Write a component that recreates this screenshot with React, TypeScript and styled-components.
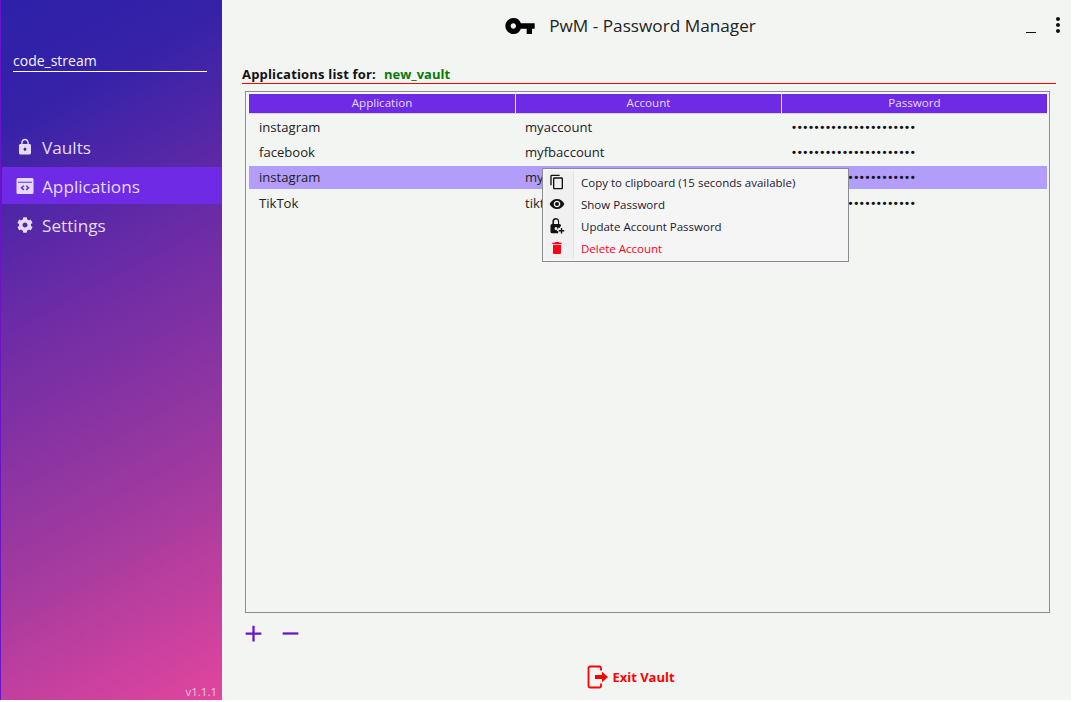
import styled, { createGlobalStyle } from "styled-components";
import { MdContentCopy, MdVisibility, MdDelete, MdMoreVert, MdVpnKey, MdLock, MdAdd, MdRemove } from "react-icons/md";
import { FaCog } from "react-icons/fa";

const Global = createGlobalStyle`
  html, body { margin: 0; padding: 0; background: #fff; }
  body { font-family: "Open Sans", "Noto Sans", sans-serif; }
`;

const Shell = styled.div`
  width: 1071px;
  height: 700px;
  display: flex;
  background: #f3f5f3;
  overflow: hidden;
`;

const Sidebar = styled.aside`
  width: 222px;
  flex: none;
  box-sizing: border-box;
  border-left: 1px solid #6a14c8;
  background: linear-gradient(152deg, #2d20a8 0%, #3522a8 15%, #6b2ba6 40%, #a23a9f 72%, #e2459e 100%);
  display: flex;
  flex-direction: column;
  color: #e4dcf5;
`;

const UserField = styled.div`
  margin: 51px 15px 0 12px;
  border-bottom: 1px solid #fff;
  color: #f6f3fb;
  font-size: 14px;
  line-height: 19px;
  height: 20px;
`;

const Nav = styled.nav`
  margin-top: 56px;
  display: flex;
  flex-direction: column;
  gap: 2px;
`;

const NavItem = styled.div<{ $active?: boolean }>`
  height: 37px;
  box-sizing: border-box;
  padding: 1px 0 0 14px;
  margin-left: 1px;
  display: flex;
  align-items: center;
  gap: 8px;
  font-size: 17.2px;
  background: ${(p) => (p.$active ? "#6f2ae6" : "transparent")};
  svg { flex: none; width: 18px; height: 18px; }
`;

const GearIcon = styled(FaCog)`
  && { width: 16px; height: 16px; margin: 0 1px; }
`;

const Version = styled.div`
  margin-top: auto;
  padding: 0 5px 1px 0;
  text-align: right;
  font-size: 11.5px;
  line-height: 15px;
  color: #e5c6dd;
`;

const Main = styled.main`
  flex: 1;
  min-width: 0;
  display: flex;
  flex-direction: column;
  padding: 0 20px;
  position: relative;
`;

const TitleBar = styled.header`
  height: 52px;
  padding-right: 33px;
  display: flex;
  align-items: center;
  justify-content: center;
  gap: 13px;
  font-size: 17.2px;
  color: #222;
  svg { width: 32px; height: 32px; color: #000; }
`;

const TitleText = styled.span`
  margin-bottom: 2px;
`;

const WinControls = styled.div`
  position: absolute;
  right: 1px;
  top: 13px;
  display: flex;
  align-items: flex-start;
  gap: 10px;
`;

const MinimizeMark = styled.span`
  display: block;
  width: 10px;
  height: 1px;
  margin-top: 19px;
  background: #111;
`;

const ListHeading = styled.div`
  height: 32px;
  box-sizing: border-box;
  border-bottom: 1px solid #ff0000;
  display: flex;
  align-items: center;
  gap: 8px;
  padding-top: 12px;
  font-size: 13px;
  font-weight: 700;
  color: #111;
  margin-right: -5px;
`;

const HeadingLabel = styled.span`
  letter-spacing: 0.18px;
`;

const VaultName = styled.span`
  color: #0a7a0a;
`;

const TableBox = styled.section`
  margin: 7px 1px 0 3px;
  height: 522px;
  box-sizing: border-box;
  border: 1px solid #8a8c90;
  padding: 2px 2px 0 3px;
`;

const HeaderRow = styled.div`
  display: grid;
  grid-template-columns: 266px 266px 1fr;
  height: 19px;
  background: #6f2ae6;
  border-bottom: 1px solid #d6d6d6;
`;

const HeaderCell = styled.div`
  text-align: center;
  color: #e6dbfb;
  font-size: 11.6px;
  line-height: 18px;
  border-left: 1px solid #e6dbfb;
  &:first-child { border-left: 0; }
`;

const Row = styled.div<{ $selected?: boolean }>`
  display: grid;
  grid-template-columns: 266px 266px 1fr;
  height: 23px;
  margin-top: 2px;
  align-items: center;
  background: ${(p) => (p.$selected ? "#b39dfb" : "transparent")};
  font-size: 13.1px;
  color: #222;
  &:last-child { margin-top: 3px; }
`;

const Cell = styled.div`
  padding: 0 0 1px 10px;
  white-space: nowrap;
`;

const Dots = styled(Cell)`
  padding-left: 11px;
  font-family: "Liberation Sans", sans-serif;
  font-size: 11.5px;
  letter-spacing: 1.63px;
  font-weight: 700;
  color: #111;
`;

const RowActions = styled.div`
  height: 40px;
  display: flex;
  align-items: center;
  gap: 10px;
  margin-left: -2px;
  color: #6a14c8;
  svg { width: 27px; height: 27px; }
`;

const ExitButton = styled.button`
  align-self: center;
  margin: 12px 31px 0 0;
  padding: 0;
  border: 0;
  background: none;
  display: flex;
  align-items: center;
  gap: 3px;
  color: #ff0000;
  font-family: inherit;
  font-size: 13px;
  font-weight: 700;
  svg { width: 22px; height: 24px; }
`;

const ContextMenu = styled.div`
  position: absolute;
  left: 320px;
  top: 168px;
  width: 307px;
  height: 94px;
  box-sizing: border-box;
  border: 1px solid #8a8c90;
  background: #f5f5f5;
  padding: 2px 2px;
  display: flex;
  flex-direction: column;
`;

const MenuItem = styled.div<{ $danger?: boolean }>`
  height: 22px;
  display: flex;
  align-items: center;
  font-size: 11.5px;
  color: ${(p) => (p.$danger ? "#ff0018" : "#1c1830")};
`;

const MenuIcon = styled.span<{ $danger?: boolean }>`
  width: 29px;
  height: 22px;
  box-sizing: border-box;
  flex: none;
  margin-right: 7px;
  padding-left: 4px;
  background: #f0f0f0;
  border-right: 1px solid #e2e2e2;
  display: flex;
  align-items: center;
  color: ${(p) => (p.$danger ? "#ff0018" : "#111")};
  svg { width: 16px; height: 16px; }
`;

const rows = [
  { app: "instagram", account: "myaccount" },
  { app: "facebook", account: "myfbaccount" },
  { app: "instagram", account: "my", selected: true },
  { app: "TikTok", account: "tikt" },
];

const AppsIcon = () => (
  <svg viewBox="0 0 18 18" fill="currentColor">
    <path
      fillRule="evenodd"
      d="M2 1h14a1.500 1.500 0 0 1 1.500 1.500v13A1.500 1.500 0 0 1 16 17H2a1.500 1.500 0 0 1-1.500-1.500v-13A1.500 1.500 0 0 1 2 1ZM2 4.800v1h14v-1H2Zm5.300 3.400L4.400 10.800l2.900 2.600 1-1.100-1.700-1.500 1.700-1.500-1-1.100Zm3.400 0-1 1.100 1.700 1.500-1.700 1.500 1 1.100 2.900-2.600-2.900-2.600Z"
    />
  </svg>
);

const LockPlusIcon = () => (
  <svg viewBox="0 0 16 16" fill="currentColor">
    <path d="M7 0a3.600 3.600 0 0 0-3.600 3.600V6H3a1.500 1.500 0 0 0-1.500 1.500v6.200A1.500 1.500 0 0 0 3 15.200h6.200V13H7.800v-1.800h1.400V9.800H11V8.600h1V7.500A1.500 1.500 0 0 0 10.500 6h-.4V3.600A3.600 3.600 0 0 0 7 0Zm0 1.600a2 2 0 0 1 2 2V6H5V3.600a2 2 0 0 1 2-2ZM7 9a1.500 1.500 0 1 1 0 3 1.500 1.500 0 0 1 0-3Z" />
    <path d="M11.800 10h1.400v2h2v1.400h-2v2h-1.400v-2h-2V12h2v-2Z" />
  </svg>
);

const ExitIcon = () => (
  <svg viewBox="0 0 22 24" fill="none">
    <path d="M14 5.500V3A1.500 1.500 0 0 0 12.500 1.500H3A1.500 1.500 0 0 0 1.500 3v18A1.500 1.500 0 0 0 3 22.500h9.500A1.500 1.500 0 0 0 14 21v-2.500" stroke="currentColor" strokeWidth="1.800" />
    <path d="M8 10h7V6.800L21 12l-6 5.200V14H8v-4Z" fill="currentColor" />
  </svg>
);

export default function App() {
  return (
    <Shell>
      <Global />
      <Sidebar>
        <UserField>code_stream</UserField>
        <Nav>
          <NavItem><MdLock />Vaults</NavItem>
          <NavItem $active><AppsIcon />Applications</NavItem>
          <NavItem><GearIcon />Settings</NavItem>
        </Nav>
        <Version>v1.1.1</Version>
      </Sidebar>
      <Main>
        <TitleBar>
          <MdVpnKey />
          <TitleText>PwM - Password Manager</TitleText>
        </TitleBar>
        <WinControls>
          <MinimizeMark />
          <MdMoreVert size={24} color="#111" />
        </WinControls>
        <ListHeading>
          <HeadingLabel>Applications list for:</HeadingLabel>
          <VaultName>new_vault</VaultName>
        </ListHeading>
        <TableBox>
          <HeaderRow>
            <HeaderCell>Application</HeaderCell>
            <HeaderCell>Account</HeaderCell>
            <HeaderCell>Password</HeaderCell>
          </HeaderRow>
          {rows.map((r, i) => (
            <Row key={i} $selected={r.selected}>
              <Cell>{r.app}</Cell>
              <Cell>{r.account}</Cell>
              <Dots>{"•".repeat(22)}</Dots>
            </Row>
          ))}
        </TableBox>
        <RowActions>
          <MdAdd />
          <MdRemove />
        </RowActions>
        <ExitButton>
          <ExitIcon />
          Exit Vault
        </ExitButton>
        <ContextMenu>
          <MenuItem><MenuIcon><MdContentCopy /></MenuIcon>Copy to clipboard (15 seconds available)</MenuItem>
          <MenuItem><MenuIcon><MdVisibility /></MenuIcon>Show Password</MenuItem>
          <MenuItem><MenuIcon><LockPlusIcon /></MenuIcon>Update Account Password</MenuItem>
          <MenuItem $danger><MenuIcon $danger><MdDelete /></MenuIcon>Delete Account</MenuItem>
        </ContextMenu>
      </Main>
    </Shell>
  );
}
